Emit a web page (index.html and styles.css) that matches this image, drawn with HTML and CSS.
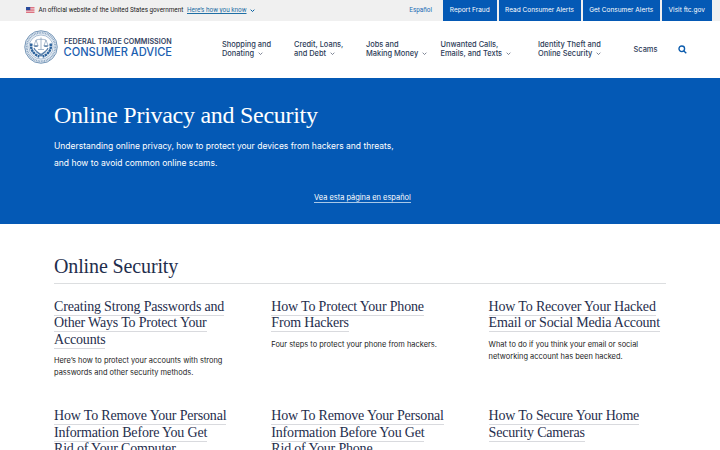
FILE: index.html
```html
<!DOCTYPE html>
<html lang="en">
  <head>
    <meta charset="UTF-8" />
    <meta name="viewport" content="width=device-width, initial-scale=1.0" />
    <title>Online Privacy and Security | Consumer Advice</title>
    <link rel="stylesheet" href="styles.css">
  </head>
  <body>
    <div class="gov-banner">
      <svg class="flag" viewBox="0 0 16 11">
        <rect width="16" height="11" fill="#f3dfe2" />
        <path d="M0 .8h16M0 4h16M0 7.2h16M0 10.3h16" stroke="#d5495b" stroke-width="1.5" />
        <rect width="8" height="6" fill="#294a9b" />
      </svg>
      <span class="gov-text">An official website of the United States government</span>
      <a class="gov-link" href="#">Here’s how you know</a>
      <svg class="chevron gov-chevron" viewBox="0 0 8 5"><path d="M1 1l3 3 3-3" /></svg>
      <div class="utility">
        <a class="lang" href="#">Español</a>
        <a class="btn" style="width:53.5px" href="#">Report Fraud</a>
        <a class="btn" style="width:82px" href="#">Read Consumer Alerts</a>
        <a class="btn" style="width:77.5px" href="#">Get Consumer Alerts</a>
        <a class="btn" style="width:49.5px" href="#">Visit ftc.gov</a>
      </div>
    </div>

    <header class="site-header">
      <a class="logo" href="#">
        <svg class="seal" viewBox="0 0 68 68">
          <circle cx="34" cy="34" r="32.5" fill="#e7eef5" stroke="#567da6" stroke-width="1.6" />
          <circle cx="34" cy="34" r="28.5" fill="none" stroke="#8aa5c2" stroke-width="4" stroke-dasharray="1.8 1.5" />
          <circle cx="34" cy="34" r="24" fill="#fff" stroke="#7897b8" stroke-width="1.2" />
          <path d="M15 27c-3 12 4 22 16 26M53 27c3 12-4 22-16 26" fill="none" stroke="#2f659e" stroke-width="5" stroke-dasharray="5 1" />
          <path d="M20 36c2 6 7 9 14 13 7-4 12-7 14-13M25 44c3 2 6 3 9 8 3-5 6-6 9-8" fill="none" stroke="#5c83ad" stroke-width="2.5" />
          <path d="M34 15v24M24 20c5-2 15-2 20 0M24 20l-4 11h8zM44 20l-4 11h8zM28 39h12" fill="none" stroke="#7793b1" stroke-width="1.3" />
          <path d="M19 31h10c-1 4-9 4-10 0zM39 31h10c-1 4-9 4-10 0z" fill="#6788ac" />
        </svg>
        <span class="logo-text">
          <span class="logo-top">FEDERAL TRADE COMMISSION</span>
          <span class="logo-bottom">CONSUMER ADVICE</span>
        </span>
      </a>
      <nav class="main-nav">
        <a href="#">Shopping and<br>Donating <svg class="chevron" viewBox="0 0 8 5"><path d="M1 1l3 3 3-3" /></svg></a>
        <a href="#">Credit, Loans,<br>and Debt <svg class="chevron" viewBox="0 0 8 5"><path d="M1 1l3 3 3-3" /></svg></a>
        <a href="#">Jobs and<br>Making Money <svg class="chevron" viewBox="0 0 8 5"><path d="M1 1l3 3 3-3" /></svg></a>
        <a href="#">Unwanted Calls,<br>Emails, and Texts <svg class="chevron" viewBox="0 0 8 5"><path d="M1 1l3 3 3-3" /></svg></a>
        <a href="#">Identity Theft and<br>Online Security <svg class="chevron" viewBox="0 0 8 5"><path d="M1 1l3 3 3-3" /></svg></a>
        <a class="single" href="#">Scams</a>
        <svg class="search" viewBox="0 0 16 16"><circle cx="6.7" cy="6.7" r="5" /><path d="M10.5 10.5l4.2 4.2" /></svg>
      </nav>
    </header>

    <section class="hero">
      <h1>Online Privacy and Security</h1>
      <p>Understanding online privacy, how to protect your devices from hackers and threats,<br>and how to avoid common online scams.</p>
      <div class="translate"><a href="#">Vea esta página en español</a></div>
    </section>

    <main class="content">
      <h2>Online Security</h2>
      <div class="articles">
        <article>
          <h3><a href="#">Creating Strong Passwords and<br>Other Ways To Protect Your<br>Accounts</a></h3>
          <p>Here’s how to protect your accounts with strong<br>passwords and other security methods.</p>
        </article>
        <article>
          <h3><a href="#">How To Protect Your Phone<br>From Hackers</a></h3>
          <p>Four steps to protect your phone from hackers.</p>
        </article>
        <article>
          <h3><a href="#">How To Recover Your Hacked<br>Email or Social Media Account</a></h3>
          <p>What to do if you think your email or social<br>networking account has been hacked.</p>
        </article>
        <article>
          <h3><a href="#">How To Remove Your Personal<br>Information Before You Get<br>Rid of Your Computer</a></h3>
        </article>
        <article>
          <h3><a href="#">How To Remove Your Personal<br>Information Before You Get<br>Rid of Your Phone</a></h3>
        </article>
        <article>
          <h3><a href="#">How To Secure Your Home<br>Security Cameras</a></h3>
        </article>
      </div>
    </main>
  </body>
</html>
```
FILE: styles.css
```css
* {
  box-sizing: border-box;
}
body {
  margin: 0;
  height: 450px;
  overflow: hidden;
  background: #fff;
  color: #1b1b1b;
  font-family: Inter, "Liberation Sans", sans-serif;
  white-space: nowrap;
}
a {
  color: inherit;
  text-decoration: none;
}
h1, h2, h3, p {
  margin: 0;
}

/* banner */
.gov-banner {
  display: flex;
  align-items: center;
  height: 20.5px;
  padding: 0 8.5px 0 26px;
  background: #f0f0f0;
  font-size: 6.5px;
}
.flag {
  width: 8.5px;
  height: 5.8px;
  margin-right: 4px;
}
.gov-text,
.gov-link,
.lang {
  font-family: Roboto, "Liberation Sans", sans-serif;
  font-size: 6.4px;
}
.gov-text {
  width: 144.5px;
  letter-spacing: -0.02px;
}
.gov-link {
  margin: 0 3px 0 4px;
  color: #1f6fa5;
  text-decoration: underline;
}
.chevron {
  width: 5px;
  height: 3.2px;
  margin-left: 2px;
  overflow: visible;
}
.chevron path {
  fill: none;
  stroke: #555f73;
  stroke-width: 1.2;
}
.gov-chevron {
  margin: 0;
}
.gov-chevron path {
  stroke: #005ea2;
  stroke-width: 1.6;
}
.utility {
  display: flex;
  gap: 2px;
  height: 100%;
  margin-left: auto;
  line-height: 21px;
}
.lang {
  margin-right: 9px;
  color: #1b6cb5;
}
.btn {
  background: #0459b5;
  color: #fff;
  text-align: center;
}

/* header */
.site-header {
  display: flex;
  height: 57px;
  padding-left: 24px;
}
.logo {
  display: flex;
  width: 198px;
  padding-top: 9px;
}
.seal {
  width: 34px;
  height: 34px;
  margin-right: 5.5px;
}
.logo-text {
  display: flex;
  flex-direction: column;
}
.logo-top {
  margin-top: 7.5px;
  padding-left: 0.5px;
  font-size: 7.15px;
  font-weight: 600;
  line-height: 9px;
  color: #34435f;
}
.logo-bottom {
  font-size: 11.1px;
  font-weight: 500;
  line-height: 12px;
  color: #1b5eb0;
}
.main-nav {
  display: grid;
  grid-template-columns: 72px 72px 74.5px 97.5px 95.5px 44.5px 9px;
  align-items: center;
  height: 56px;
  font-size: 7.43px;
  font-weight: 500;
  line-height: 9px;
  color: #2c3b58;
}
.main-nav .chevron {
  vertical-align: 0;
}
.single {
  padding-top: 1px;
}
.search {
  width: 9px;
  height: 9px;
  margin-top: 1px;
}
.search circle,
.search path {
  fill: none;
  stroke: #0c5cad;
  stroke-width: 2.4;
}

/* hero */
.hero {
  height: 146px;
  padding: 22px 54px 0;
  background: #0459b5;
  color: #fff;
}
.hero h1 {
  font-family: "Liberation Serif", serif;
  font-size: 24px;
  font-weight: 400;
  line-height: 30px;
  letter-spacing: -0.28px;
}
.hero p {
  margin-top: 8.5px;
  font-size: 8.5px;
  line-height: 16.6px;
}
.translate {
  margin-top: 19.8px;
  padding-left: 260px;
  font-size: 7.44px;
  line-height: 14px;
}
.translate a {
  border-bottom: 1px solid #a9c8e8;
}

/* articles */
.content {
  padding: 27px 54px 0;
}
.content h2 {
  height: 33px;
  border-bottom: 1px solid #dcdee0;
  font-family: "Liberation Serif", serif;
  font-size: 20px;
  font-weight: 400;
  line-height: 30px;
  letter-spacing: -0.13px;
  color: #1f2e4d;
}
.articles {
  display: grid;
  grid-template-columns: repeat(3, 177.3px);
  grid-template-rows: 93.5px auto;
  gap: 16px 40px;
  padding-top: 15.3px;
}
.articles h3 {
  font-family: "Liberation Serif", serif;
  font-size: 14px;
  font-weight: 400;
  line-height: 16.4px;
  letter-spacing: -0.18px;
  color: #1f2e4d;
}
.articles h3 a {
  padding-bottom: 1px;
  border-bottom: 1px solid #d9dade;
}
.articles p {
  margin-top: 7px;
  font-size: 7.45px;
  line-height: 12px;
}
```
